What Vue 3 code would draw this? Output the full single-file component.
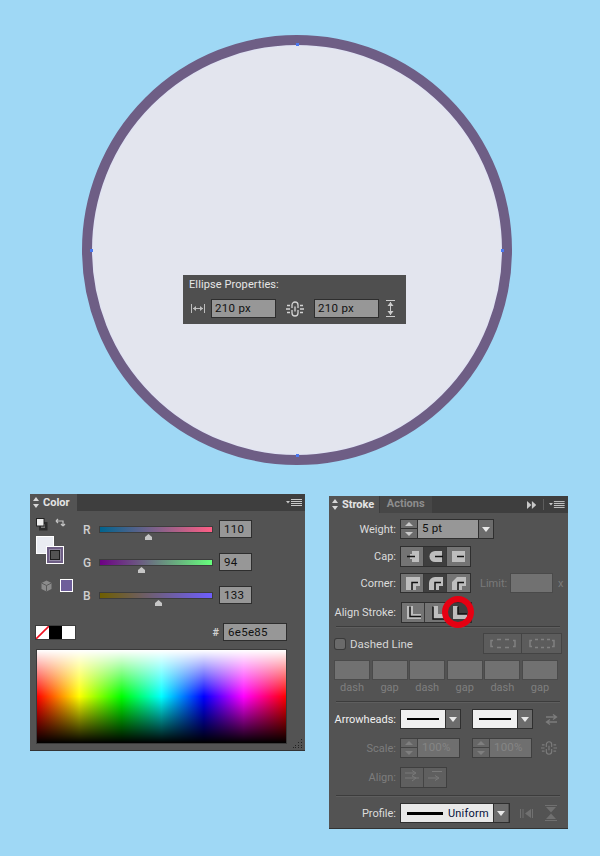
<script setup>
const sliders = [
  { label: 'R', value: 110, from: '#00648e', to: '#ff5e85', thumb: 48 },
  { label: 'G', value: 94, from: '#6e0085', to: '#66ff7c', thumb: 41 },
  { label: 'B', value: 133, from: '#6e5e00', to: '#6e5eff', thumb: 58 }
]
const capIcons = [
  { on: false, fill: 'M11 4h7v11h-7v-3H9V7h2z', line: 'M6 9.500h8' },
  { on: true, fill: 'M18 4h-7a5.500 5.500 0 0 0 0 11h7z', line: 'M11 9.500h8' },
  { on: false, fill: 'M5 4h13v11H5z', line: 'M10 9.500h7' }
]
const cornerIcons = [
  { on: false, fill: 'M5 3h14v9h-4v4H5z', line: 'M11 16V8.500h6' },
  { on: true, fill: 'M5 16V9a6 6 0 0 1 6-6h8v9h-4v4z', line: 'M11 16V8.500h6' },
  { on: false, fill: 'M5 16V8l5-5h9v9h-4v4z', line: 'M11 16V8.500h6' }
]
const alignIcons = [
  { on: false, fill: 'M5 3h6v8h8v5H5z', line: 'M8 3.500v10h11' },
  { on: false, fill: 'M8 3h5v8h6v5H8z', line: 'M8 3.500v12.500h11' },
  { on: true, fill: 'M5 3h5v8h9v5H5z', line: 'M10 3.500v7.500h9' }
]
const dashes = ['dash', 'gap', 'dash', 'gap', 'dash', 'gap']
</script>

<template>
  <div class="stage">
    <section class="artboard">
      <div class="ellipse">
        <i class="anchor a-top"></i>
        <i class="anchor a-left"></i>
        <i class="anchor a-right"></i>
        <i class="anchor a-bottom"></i>
        <div class="props">
          <div class="props-title">Ellipse Properties:</div>
          <div class="props-row">
            <svg class="ic-w" width="14" height="9" viewBox="0 0 14 9"><path d="M.500 0v9M13.500 0v9M2 4.500h10" stroke="#bdbdbd" fill="none"/><path d="M2 4.500l3-2.500v5zM12 4.500l-3-2.500v5z" fill="#bdbdbd"/></svg>
            <span class="field props-field">210 px</span>
            <svg class="ic-chain" width="18" height="16" viewBox="0 0 18 16"><g fill="none" stroke="#d4d4d4" stroke-width="1.300"><path d="M6 7V4a3 3 0 0 1 6 0v3M6 9v3a3 3 0 0 0 6 0V9M9 5.500v5M1 4.500h3M0 8h4M1 11.500h3M14 4.500h3M14 8h4M14 11.500h3"/></g></svg>
            <span class="field props-field">210 px</span>
            <svg class="ic-h" width="9" height="17" viewBox="0 0 9 17"><path d="M0 .500h9M0 16.500h9M4.500 2v13" stroke="#ccc" fill="none"/><path d="M4.500 2l3 4h-6zM4.500 15l3-4h-6z" fill="#ccc"/></svg>
          </div>
        </div>
      </div>
    </section>

    <section class="panels">
      <div class="panel color-panel">
        <header class="tabs">
          <div class="tab"><span class="arrows"></span>Color</div>
          <svg class="menu" width="16" height="8" viewBox="0 0 16 8"><path d="M5 .500h11M5 2.500h11M5 4.500h11M5 6.500h11" stroke="#c8c8c8"/><path d="M0 2h4L2 4.500z" fill="#c8c8c8"/></svg>
        </header>
        <div class="color-top">
          <div class="color-left">
            <div class="mini-icons">
              <svg width="12" height="13" viewBox="0 0 12 13"><rect x="3" y="4" width="8.500" height="8.500" fill="#2d2d2d"/><rect x="5" y="6" width="4" height="4" fill="#777"/><rect x="0.500" y="0.500" width="7.500" height="7.500" fill="#eee" stroke="#222"/></svg>
              <svg width="12" height="11" viewBox="0 0 12 11"><path d="M1 3h7v5M8 8l-2-2M8 8l2-2M1 3l2-2M1 3l2 2" fill="none" stroke="#c4c4c4" stroke-width="1.200"/></svg>
            </div>
            <div class="fill-stack">
              <div class="fill-swatch"></div>
              <div class="stroke-swatch"><span></span></div>
            </div>
            <div class="cube-row">
              <svg width="11" height="12" viewBox="0 0 11 12"><path d="M5.500.500l5 2.500v6l-5 2.500-5-2.500V3z" fill="#8b8b8b"/><path d="M.500 3l5 2.500 5-2.500M5.500 5.500v6" fill="none" stroke="#5a5a5a"/></svg>
              <div class="color-chip"></div>
            </div>
          </div>
          <div class="slider-col">
            <div v-for="s in sliders" :key="s.label" class="slider-row">
              <span class="s-label">{{ s.label }}</span>
              <div class="track" :style="{ background: `linear-gradient(90deg, ${s.from}, ${s.to})` }">
                <svg class="thumb" :style="{ left: s.thumb - 4 + 'px' }" width="9" height="6" viewBox="0 0 9 6"><path d="M4.500 0L8 3v3H1V3z" fill="#c6c6c6"/></svg>
              </div>
              <span class="field s-field">{{ s.value }}</span>
            </div>
          </div>
        </div>
        <div class="hex-row">
          <div class="none-set">
            <svg width="13" height="13" viewBox="0 0 13 13"><rect width="13" height="13" fill="#fff"/><path d="M0 13L13 0" stroke="#f01020" stroke-width="1.600"/></svg>
            <span class="c-black"></span>
            <span class="c-white"></span>
          </div>
          <span class="hash">#</span>
          <span class="field hex-field">6e5e85</span>
        </div>
        <div class="spectrum"></div>
        <svg class="grip" width="11" height="11" viewBox="0 0 11 11"><path d="M9 1h1v1H9zM6 4h1v1H6zM9 4h1v1H9zM3 7h1v1H3zM6 7h1v1H6zM9 7h1v1H9zM1 9h1v1H1zM3 9h1v1H3zM6 9h1v1H6zM9 9h1v1H9z" fill="#222"/></svg>
      </div>

      <div class="panel stroke-panel">
        <header class="tabs">
          <div class="tab stroke-tab"><span class="arrows"></span>Stroke</div>
          <div class="tab-off">Actions</div>
          <svg class="ff" width="10" height="8" viewBox="0 0 10 8"><path d="M0 0l4.500 4L0 8zM5 0l4.500 4L5 8z" fill="#c8c8c8"/></svg>
          <span class="tab-sep"></span>
          <svg class="menu" width="16" height="8" viewBox="0 0 16 8"><path d="M5 .500h11M5 2.500h11M5 4.500h11M5 6.500h11" stroke="#c8c8c8"/><path d="M0 2h4L2 4.500z" fill="#c8c8c8"/></svg>
        </header>

        <div class="row r-weight">
          <label class="lbl">Weight:</label>
          <div class="combo">
            <span class="spin"><i class="up"></i><i class="down"></i></span>
            <span class="spin-value">5 pt</span>
            <span class="drop"></span>
          </div>
        </div>

        <div class="row r-cap">
          <label class="lbl">Cap:</label>
          <div class="btns">
            <span v-for="(b, i) in capIcons" :key="i" class="btn" :class="{ on: b.on }">
              <svg width="23" height="19" viewBox="0 0 23 19"><path :d="b.fill" fill="#bebebe"/><path :d="b.line" stroke="#111" stroke-width="1.500" fill="none"/></svg>
            </span>
          </div>
        </div>

        <div class="row r-corner">
          <label class="lbl">Corner:</label>
          <div class="btns">
            <span v-for="(b, i) in cornerIcons" :key="i" class="btn" :class="{ on: b.on }">
              <svg width="23" height="18" viewBox="0 0 23 18"><path :d="b.fill" fill="#bebebe"/><path :d="b.line" stroke="#111" stroke-width="1.500" fill="none"/></svg>
            </span>
          </div>
          <span class="limit">Limit:</span>
          <span class="limit-box"></span>
          <span class="limit-x">x</span>
        </div>

        <div class="row r-align">
          <label class="lbl">Align Stroke:</label>
          <div class="btns align-btns">
            <span v-for="(b, i) in alignIcons" :key="i" class="btn" :class="{ on: b.on }">
              <svg width="23" height="19" viewBox="0 0 23 19"><path :d="b.fill" fill="#bebebe"/><path :d="b.line" stroke="#111" stroke-width="1.500" fill="none"/></svg>
            </span>
          </div>
          <span class="ring"></span>
        </div>

        <hr class="sep s1" />

        <div class="row r-dashed">
          <span class="check"></span>
          <span class="dashed-text">Dashed Line</span>
          <div class="dash-btns">
            <span class="dbtn"><svg width="26" height="11" viewBox="0 0 26 11"><path d="M3 2.500H1v6h2M7 1.500h4M15 1.500h4M23 2.500h2v6h-2M7 9.500h4M15 9.500h4" stroke="#808080" fill="none" stroke-width="1.500"/></svg></span>
            <span class="dbtn"><svg width="26" height="11" viewBox="0 0 26 11"><path d="M3 2.500H1v6h2M6 1.500h3M12 1.500h3M18 1.500h3M23 2.500h2v6h-2M6 9.500h3M12 9.500h3M18 9.500h3" stroke="#808080" fill="none" stroke-width="1.500"/></svg></span>
          </div>
        </div>

        <div class="dash-grid">
          <div v-for="(d, i) in dashes" :key="i" class="dash-cell">
            <span class="dash-box"></span>
            <span class="dash-lbl">{{ d }}</span>
          </div>
        </div>

        <hr class="sep s2" />

        <div class="row r-arrow">
          <label class="lbl lbl-bright">Arrowheads:</label>
          <div class="combo arrow-combo">
            <span class="stroke-sample"><i></i></span><span class="drop"></span>
          </div>
          <div class="combo arrow-combo second">
            <span class="stroke-sample"><i></i></span><span class="drop"></span>
          </div>
          <svg class="swap" width="13" height="11" viewBox="0 0 13 11"><path d="M1 3h10M8 .500L11.500 3 8 5.500M12 8H2M5 5.500L1.500 8 5 10.500" stroke="#7c7c7c" fill="none" stroke-width="1.300"/></svg>
        </div>

        <div class="row r-scale">
          <label class="lbl lbl-off">Scale:</label>
          <div class="combo dim scale-combo">
            <span class="spin"><i class="up"></i><i class="down"></i></span>
            <span class="spin-value">100%</span>
          </div>
          <div class="combo dim scale-combo second">
            <span class="spin"><i class="up"></i><i class="down"></i></span>
            <span class="spin-value">100%</span>
          </div>
          <svg class="chain2" width="16" height="16" viewBox="0 0 18 16"><g fill="none" stroke="#7c7c7c" stroke-width="1.300"><path d="M6 7V4a3 3 0 0 1 6 0v3M6 9v3a3 3 0 0 0 6 0V9M9 5.500v5M1 4.500h3M0 8h4M1 11.500h3M14 4.500h3M14 8h4M14 11.500h3"/></g></svg>
        </div>

        <div class="row r-alignarrow">
          <label class="lbl lbl-off">Align:</label>
          <div class="btns dim-btns">
            <span class="btn"><svg width="22" height="17" viewBox="0 0 22 17"><path d="M4 5h10M11 2.500L15 5l-4 2.500M4 10h14M11 8l4 2-4 3" stroke="#7a7a7a" fill="none"/></svg></span>
            <span class="btn"><svg width="22" height="17" viewBox="0 0 22 17"><path d="M8 3.500h10M4 10h10M11 7.500L15 10l-4 2.500" stroke="#7a7a7a" fill="none"/></svg></span>
          </div>
        </div>

        <hr class="sep s3" />

        <div class="row r-profile">
          <label class="lbl">Profile:</label>
          <div class="combo profile-combo">
            <span class="profile-sample"><i></i><b>Uniform</b></span><span class="drop"></span>
          </div>
          <svg class="flip1" width="13" height="9" viewBox="0 0 13 9"><path d="M.500 0v9M3 0v9M12.500 0v9" stroke="#707070" fill="none"/><path d="M11 0v9L5 4.500z" fill="#707070"/></svg>
          <svg class="flip2" width="12" height="16" viewBox="0 0 12 16"><path d="M0 .500h12M0 15.500h12" stroke="#707070"/><path d="M1 2h10L6 7.500zM1 14h10L6 8.500z" fill="#707070"/></svg>
        </div>
      </div>
    </section>
  </div>
</template>

<style>
html, body { margin: 0; background: #9fd8f5; }
</style>

<style scoped>
* { box-sizing: border-box; }
.stage {
  width: 600px; height: 856px; overflow: hidden; background: #9fd8f5;
  font: 11px Roboto, "Noto Sans", sans-serif; color: #d8d8d8;
}
.artboard { padding: 35px 0 0 82px; height: 494px; }
.ellipse {
  position: relative; width: 430px; height: 430px; border-radius: 50%;
  background: #e3e5ee; border: 10px solid #6e5e85;
  box-shadow: inset 0 0 0 1px #dfe2f4;
}
.anchor { position: absolute; width: 3px; height: 3px; background: #4a78f0; }
.a-top { left: 204px; top: -2px; }
.a-bottom { left: 204px; bottom: -2px; }
.a-left { left: -2px; top: 204px; }
.a-right { right: -2px; top: 204px; }
.props {
  position: absolute; left: 91px; top: 230px; width: 223px; height: 49px;
  background: #4f4f4f; padding: 2px 6px 0;
}
.props-title { font-size: 11px; line-height: 16px; color: #e6e6e6; letter-spacing: .1px; }
.props-row { display: flex; align-items: center; margin-top: 6px; height: 19px; }
.ic-w { margin: 0 6px 0 2px; }
.ic-chain { margin: 0 10px 0 10px; }
.ic-h { margin-left: 7px; }
.field {
  display: block; background: #979797; border: 1px solid #2e2e2e; color: #111;
  font-size: 11.500px; line-height: 17px; padding-left: 3px; letter-spacing: .3px;
}
.props-field { width: 65px; height: 19px; }

.panels { display: flex; align-items: flex-start; gap: 24px; padding-left: 30px; }
.panel { position: relative; background: #535353; border-bottom: 1px solid #333; }
.color-panel { width: 275px; height: 257px; }
.stroke-panel { width: 239px; height: 333px; margin-top: 2px; }

.tabs { display: flex; align-items: center; height: 17px; background: #3e3e3e; }
.tab {
  display: flex; align-items: center; height: 17px; width: 47px; padding-left: 3px;
  background: #535353; color: #e4e4e4; font-weight: 700; font-size: 11px;
}
.arrows { position: relative; width: 7px; height: 11px; margin-right: 3px; }
.arrows::before, .arrows::after {
  content: ""; position: absolute; left: 0; border-left: 3.500px solid transparent; border-right: 3.500px solid transparent;
}
.arrows::before { top: 0; border-bottom: 4px solid #d8d8d8; }
.arrows::after { bottom: 0; border-top: 4px solid #d8d8d8; }
.menu { margin-left: auto; margin-right: 3px; }
.stroke-tab { width: 51px; }
.tab-off {
  width: 53px; height: 17px; line-height: 16px; background: #474747; text-align: center;
  color: #8d8d8d; font-weight: 700; font-size: 11px; margin-left: 1px;
}
.ff { margin-left: 95px; }
.tab-sep { width: 1px; height: 11px; background: #5d5d5d; margin-left: 7px; }
.stroke-panel .menu { margin-left: 5px; margin-right: 3px; }

.color-top { display: flex; }
.color-left { width: 53px; padding: 7px 0 0 6px; }
.mini-icons { display: flex; gap: 7px; height: 13px; align-items: flex-start; }
.fill-stack { position: relative; width: 28px; height: 28px; margin-top: 5px; }
.fill-swatch { width: 18px; height: 18px; background: #eaecf2; border: 1px solid #fff; }
.stroke-swatch {
  position: absolute; left: 10px; top: 10px; width: 18px; height: 18px;
  border: 1px solid #fff; background: #6e5e85; padding: 3px;
}
.stroke-swatch span { display: block; width: 10px; height: 10px; background: #545454; border: 1px solid #1d1d1d; box-shadow: 0 0 0 1px rgba(225,225,235,.35); }
.cube-row { display: flex; align-items: center; gap: 8px; margin: 15px 0 0 5px; }
.color-chip { width: 13px; height: 13px; background: #6e5e9a; border: 1px solid #fff; }
.slider-col { padding-top: 9px; display: flex; flex-direction: column; gap: 15px; }
.slider-row { display: flex; align-items: center; height: 18px; }
.s-label { width: 17px; font-weight: 500; color: #cfcfcf; font-size: 12px; padding-top: 1px; }
.track { position: relative; width: 112px; height: 5px; box-shadow: 0 0 0 1px #3d3d3d; }
.thumb { position: absolute; top: 7px; }
.s-field { width: 33px; height: 18px; margin-left: 7px; line-height: 16px; padding-left: 4px; }
.hex-row { display: flex; align-items: center; margin-top: 19px; height: 18px; padding: 0 18px 0 6px; }
.none-set { display: flex; height: 13px; box-shadow: 0 0 0 1px #3c3c3c; }
.none-set span { width: 13px; height: 13px; }
.c-black { background: #000; }
.c-white { background: #fff; }
.hash { margin-left: auto; margin-right: 4px; font-weight: 700; color: #d0d0d0; }
.hex-field { width: 64px; height: 18px; line-height: 16px; padding-left: 4px; }
.spectrum {
  width: 249px; height: 93px; margin: 9px 0 0 7px; box-shadow: 0 0 0 1px #3a3a3a;
  background:
    linear-gradient(180deg, #fff 0%, rgba(255,255,255,0) 50%, rgba(0,0,0,0) 50%, #000 100%),
    linear-gradient(90deg, #f00 0%, #ff0 17%, #0f0 34%, #0ff 50%, #00f 67%, #f0f 83%, #f00 100%);
}
.grip { position: absolute; right: 2px; bottom: 1px; }

.row { display: flex; align-items: center; position: relative; }
.lbl { width: 67px; text-align: right; color: #dcdcdc; font-size: 11px; white-space: nowrap; margin-right: 5px; flex: none; }
.lbl-bright { color: #f0f0f0; }
.lbl-off { color: #7d7d7d; }
.r-weight { margin-top: 7px; height: 18px; }
.r-cap { margin-top: 9px; height: 19px; }
.r-corner { margin-top: 8px; height: 18px; }
.r-align { margin-top: 11px; height: 18px; }
.r-dashed { margin-top: 7px; height: 19px; }
.r-arrow { margin-top: 8px; height: 18px; }
.r-scale { margin-top: 11px; height: 18px; }
.r-alignarrow { margin-top: 11px; height: 19px; }
.r-profile { margin-top: 8px; height: 18px; }

.combo { display: flex; height: 18px; box-shadow: 0 0 0 1px #2f2f2f; }
.spin { position: relative; display: block; width: 17px; background: #6c6c6c; border-right: 1px solid #2f2f2f; }
.spin i { position: absolute; left: 4px; border-left: 4px solid transparent; border-right: 4px solid transparent; }
.spin .up { top: 2px; border-bottom: 4px solid #c9c9c9; }
.spin .down { bottom: 2px; border-top: 4px solid #c9c9c9; }
.spin::after { content: ""; position: absolute; left: 0; right: 0; top: 8px; height: 1px; background: #2f2f2f; }
.spin-value { display: block; background: #979797; color: #111; padding-left: 4px; line-height: 17px; font-size: 11.500px; letter-spacing: .2px; width: 60px; }
.drop { position: relative; display: block; width: 15px; background: #6c6c6c; border-left: 1px solid #2f2f2f; }
.drop::after {
  content: ""; position: absolute; left: 3px; top: 7px; border-left: 4px solid transparent;
  border-right: 4px solid transparent; border-top: 5px solid #e8e8e8;
}
.btns { display: flex; box-shadow: 0 0 0 1px #2f2f2f; }
.btn { display: block; height: 100%; line-height: 0; background: #747474; border-right: 1px solid #3a3a3a; }
.btn:last-child { border-right: 0; }
.btn.on { background: #3f3f3f; }
.r-cap .btn, .r-corner .btn { width: 23px; }
.limit { color: #7a7a7a; margin-left: 10px; font-size: 11px; width: 31px; }
.limit-box { width: 41px; height: 18px; background: #717171; box-shadow: 0 0 0 1px #4a4a4a; }
.limit-x { color: #7a7a7a; margin-left: 6px; }
.align-btns { margin-left: 1px; }
.align-btns .btn { width: 23px; }
.ring {
  position: absolute; left: 113px; top: -7px; width: 32px; height: 32px; border-radius: 50%;
  border: 6px solid #e60012;
}
.sep { border: 0; height: 1px; background: #3c3c3c; margin: 0 8px 0 7px; box-shadow: 0 1px 0 #5e5e5e; }
.s1 { margin-top: 5px; }
.s2 { margin-top: 5px; }
.s3 { margin-top: 8px; }
.check {
  width: 10px; height: 10px; margin-left: 6px; background: #6a6a6a; border-radius: 2px; box-shadow: 0 0 0 1px #3a3a3a;
}
.dashed-text { margin-left: 5px; color: #d6d6d6; font-size: 11.500px; }
.dash-btns { display: flex; margin-left: auto; margin-right: 7px; box-shadow: 0 0 0 1px #444; }
.dbtn { display: flex; align-items: center; justify-content: center; width: 38px; height: 19px; background: #5c5c5c; border-right: 1px solid #444; }
.dbtn:last-child { width: 39px; border-right: 0; }
.dash-grid { display: grid; grid-template-columns: repeat(6, 34px); column-gap: 3.600px; margin: 8px 0 0 6px; }
.dash-cell { display: flex; flex-direction: column; align-items: center; }
.dash-box { width: 34px; height: 18px; background: #717171; box-shadow: 0 0 0 1px #4a4a4a; }
.dash-lbl { color: #7f7f7f; font-size: 11px; line-height: 16px; margin-top: 1px; }
.arrow-combo { width: 59px; }
.arrow-combo.second { margin-left: 13px; }
.stroke-sample { display: flex; align-items: center; justify-content: center; width: 44px; background: #f0f0f0; }
.stroke-sample i { display: block; width: 32px; height: 2px; background: #000; }
.swap { margin-left: 13px; }
.dim { box-shadow: 0 0 0 1px #3f3f3f; }
.dim .spin { background: #666; border-color: #444; }
.dim .spin i { border-bottom-color: #7f7f7f; border-top-color: #7f7f7f; }
.dim .spin::after { background: #444; }
.scale-combo { width: 58px; }
.scale-combo.second { margin-left: 14px; }
.dim .spin-value { background: #6f6f6f; color: #858585; width: 41px; }
.chain2 { margin-left: 10px; }
.dim-btns { box-shadow: 0 0 0 1px #3f3f3f; height: 19px; }
.dim-btns .btn { width: 22.500px; background: #5f5f5f; border-color: #444; }
.profile-combo { width: 108px; }
.profile-sample { display: flex; align-items: center; width: 92px; background: #e8e8e8; padding-left: 6px; }
.profile-sample i { display: block; width: 36px; height: 3px; background: #000; flex: none; }
.profile-sample b { font-weight: 400; color: #05103a; margin-left: 5px; font-size: 11px; letter-spacing: .2px; }
.flip1 { margin-left: 11px; }
.flip2 { margin-left: 12px; }
</style>
